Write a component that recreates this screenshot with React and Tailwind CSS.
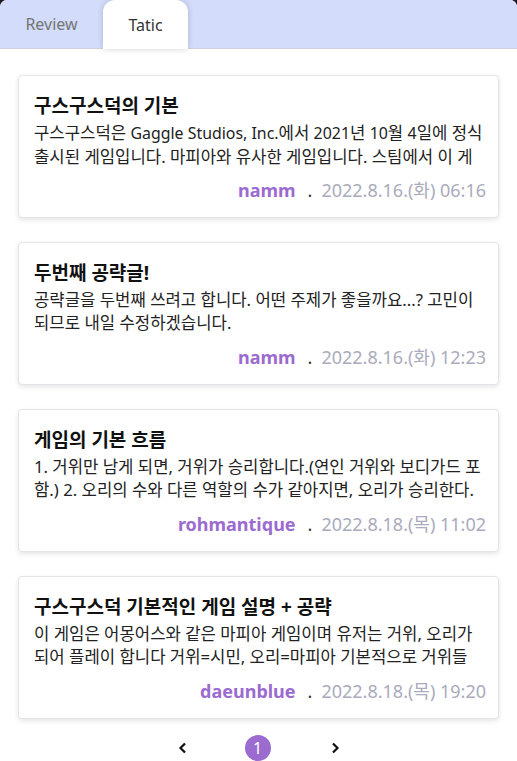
import React from "react";

const L = ({ children }) => <span className="text-[15.9px]">{children}</span>;

const posts = [
  {
    title: "구스구스덕의 기본",
    lines: [
      <>구스구스덕은 <L>Gaggle Studios, Inc.</L>에서 <L>2021</L>년 <L>10</L>월 <L>4</L>일에 정식</>,
      <>출시된 게임입니다. 마피아와 유사한 게임입니다. 스팀에서 이 게</>,
      <>임을 무료로 받을 수 있습니다.</>,
    ],
    author: "namm",
    date: "2022.8.16.(화) 06:16",
  },
  {
    title: "두번째 공략글!",
    lines: [
      <>공략글을 두번째 쓰려고 합니다. 어떤 주제가 좋을까요...? 고민이</>,
      <>되므로 내일 수정하겠습니다.</>,
    ],
    author: "namm",
    date: "2022.8.16.(화) 12:23",
  },
  {
    title: "게임의 기본 흐름",
    lines: [
      <>1. 거위만 남게 되면, 거위가 승리합니다.(연인 거위와 보디가드 포</>,
      <>함.) 2. 오리의 수와 다른 역할의 수가 같아지면, 오리가 승리한다.</>,
      <>3. 중립 역할은 각자의 승리 조건이 있습니다.</>,
    ],
    author: "rohmantique",
    date: "2022.8.18.(목) 11:02",
  },
  {
    title: "구스구스덕 기본적인 게임 설명 + 공략",
    lines: [
      <>이 게임은 어몽어스와 같은 마피아 게임이며 유저는 거위, 오리가</>,
      <>되어 플레이 합니다 거위=시민, 오리=마피아 기본적으로 거위들</>,
      <>은 임무를 수행하며 오리를 찾아냅니다.</>,
    ],
    author: "daeunblue",
    date: "2022.8.18.(목) 19:20",
  },
];

export default function App() {
  return (
    <div
      className="bg-[#1b1b24] w-[517px] h-[761px] overflow-hidden"
      style={{ fontFamily: '"Noto Sans", "Noto Sans CJK KR", sans-serif' }}
    >
      <div className="bg-white rounded-t-[7px] h-full overflow-hidden flex flex-col">
        <div className="h-[49px] bg-[#d3dcfa] border-b border-[#cfd2dc] flex items-end shrink-0">
          <div className="w-[103px] h-[49px] flex items-center justify-center text-[16px] text-[#757575]">
            Review
          </div>
          <div className="w-[85px] h-[49px] bg-white rounded-t-[12px] flex items-center justify-center text-[16px] text-[#333] shadow-[0_0_6px_rgba(0,0,0,0.18)] relative z-10 mb-[-1px]">
            Tatic
          </div>
        </div>
        <div className="px-[18px] pt-[26px] flex flex-col gap-[24px]">
          {posts.map((p, i) => (
            <div
              key={i}
              className="h-[143px] rounded-[4px] border border-[#e4e4e8] bg-white shadow-[0_2px_5px_rgba(0,0,0,0.1)] pl-[15px] pr-[12px] pt-[17px]"
            >
              <div className="text-[19px] leading-[26px] font-bold text-[#111]">
                {p.title}
              </div>
              <div className="mt-[2px] text-[16.7px] leading-[23px] text-[#222] h-[46px] overflow-hidden">
                {p.lines.map((ln, j) => (
                  <div key={j} className="whitespace-nowrap overflow-hidden">
                    {ln}
                  </div>
                ))}
              </div>
              <div className="mt-[11px] flex justify-end items-center text-[18px] leading-[24px]">
                <span className="font-bold text-[#9b6bd0]">{p.author}</span>
                <span className="ml-[12px] mr-[9px] text-[#333]">.</span>
                <span className="text-[#aaabbc]">{p.date}</span>
              </div>
            </div>
          ))}
        </div>
        <div className="flex items-center justify-center mt-[16px]">
          <svg width="14" height="14" viewBox="0 0 14 14" className="mr-[55px]">
            <path d="M9 2.5 L4.5 7 L9 11.5" fill="none" stroke="#111" strokeWidth="2.2" />
          </svg>
          <div className="w-[26px] h-[26px] rounded-full bg-[#9b6bcf] text-white text-[16px] flex items-center justify-center">
            1
          </div>
          <svg width="14" height="14" viewBox="0 0 14 14" className="ml-[57px]">
            <path d="M5 2.5 L9.5 7 L5 11.5" fill="none" stroke="#111" strokeWidth="2.2" />
          </svg>
        </div>
      </div>
    </div>
  );
}
